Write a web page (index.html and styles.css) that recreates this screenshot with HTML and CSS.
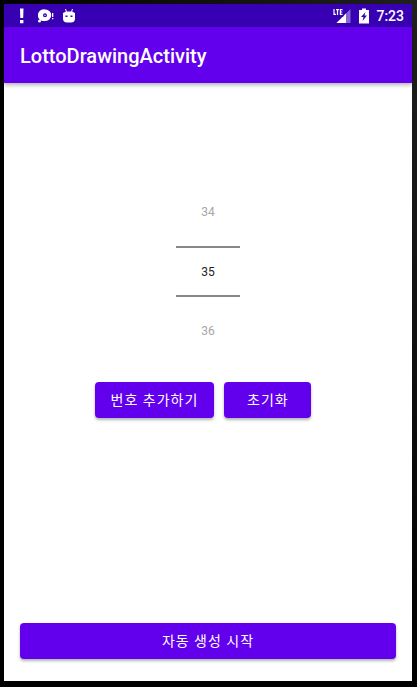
FILE: index.html
```html
<!DOCTYPE html>
<html lang="ko">
<head>
<meta charset="utf-8">
<meta name="viewport" content="width=device-width, initial-scale=1">
<title>LottoDrawingActivity</title>
<link rel="stylesheet" href="styles.css">
</head>
<body>
<div class="screen">
  <div class="status-bar">
    <div class="notifications">
      <svg class="icon-alert" width="4" height="16" viewBox="0 0 4 16" aria-hidden="true"><path fill="currentColor" d="M0 0.500h3.500l-.3 9.500h-2.900zM0 12h3.400v3.200H0z"/></svg>
      <svg class="icon-disc" width="16" height="14" viewBox="0 0 16 14" aria-hidden="true"><path fill="currentColor" fill-rule="evenodd" d="M7.500.5a5.700 5.700 0 1 1 0 11.500H4.200a5.700 5.700 0 0 1 3.300-11.500zM7 4.200a2 2 0 1 0 0 4 2 2 0 0 0 0-4z"/><circle cx="7" cy="6.200" r=".7" fill="currentColor"/><circle cx="1.500" cy="12" r="1.500" fill="currentColor"/><path fill="currentColor" d="M14 4h1.300v4H14zM14 9h1.300v1.300H14z"/></svg>
      <svg class="icon-robot" width="14" height="14" viewBox="0 0 14 14" aria-hidden="true"><path fill="none" stroke="currentColor" d="M3.500 0l1 3M10.500 0l-1 3"/><path fill="currentColor" fill-rule="evenodd" d="M4 2.500h6l3 1.500v5.500q0 4-4 4H5q-4 0-4-4V4zM3.500 6.500v1.500h2V6.500zM8.500 6.500v1.500h2V6.500z"/></svg>
    </div>
    <div class="system">
      <svg class="icon-signal" width="18" height="16" viewBox="0 0 18 16" aria-hidden="true"><path fill="currentColor" opacity=".4" d="M17.500 1v14H3.500z"/><path fill="currentColor" d="M13 5.500V15H3.500z"/><path fill="#3700b3" d="M0 0h10.500v8.500H0z"/><path fill="none" stroke="currentColor" stroke-width="1.200" d="M1 1v5.400h2M3 1.600h3M4.500 1.600V7M9.500 1.600H7.400v4.800h2.100M7.400 4h1.900"/></svg>
      <svg class="icon-battery" width="10" height="16" viewBox="0 0 10 16" aria-hidden="true"><path fill="currentColor" fill-rule="evenodd" d="M3 .5h4V2h3v13.500H0V2h3zM6.500 4L2 9h2.500L3.500 13 8 7.500H5.500z"/></svg>
      <time class="clock">7:23</time>
    </div>
  </div>
  <header class="app-bar"><h1 class="title">LottoDrawingActivity</h1></header>
  <main class="content">
    <div class="picker">
      <button class="picker-step" type="button">34</button>
      <input class="picker-value" type="text" inputmode="numeric" aria-label="번호" value="35">
      <button class="picker-step" type="button">36</button>
    </div>
    <div class="actions">
      <button class="button action" type="button">번호 추가하기</button>
      <button class="button action" type="button">초기화</button>
    </div>
    <button class="button start" type="button">자동 생성 시작</button>
  </main>
</div>
</body>
</html>
```
FILE: styles.css
```css
* {
  box-sizing: border-box;
}

body {
  margin: 0;
  padding: 4px 5px 6px 4px;
  min-height: 100vh;
  display: flex;
  background: linear-gradient(to top right, #000 50%, #202020);
  font-family: Roboto, "Noto Sans CJK KR", sans-serif;
}

.screen {
  flex: 1;
  display: flex;
  flex-direction: column;
  background: #fff;
}

.status-bar {
  height: 23px;
  padding: 0 8px 0 16px;
  display: flex;
  align-items: center;
  justify-content: space-between;
  background: #3700b3;
  color: #fff;
}

.notifications,
.system {
  display: flex;
  align-items: center;
}

.icon-disc {
  margin: 0 8px 0 14px;
}

.system {
  gap: 8px;
}

.clock {
  margin-left: -1px;
  font-size: 14px;
  line-height: 24px;
  font-weight: 500;
}

.app-bar {
  height: 56px;
  padding: 2px 16px 0;
  display: flex;
  align-items: center;
  background: #6200ee;
  color: #fff;
  box-shadow: 0 2px 4px rgba(0, 0, 0, 0.3);
}

.title {
  margin: 0;
  font-size: 20px;
  line-height: 24px;
  font-weight: 500;
}

.content {
  flex: 1;
  padding: 95px 16px 22px;
  display: flex;
  flex-direction: column;
  align-items: center;
}

.picker {
  width: 64px;
  display: flex;
  flex-direction: column;
}

.picker-step,
.picker-value {
  width: 100%;
  padding: 0;
  border: 0;
  background: none;
  font: 12px/16px Roboto, sans-serif;
  text-align: center;
}

.picker-step {
  height: 68px;
  color: #a6a6a6;
}

.picker-value {
  height: 51px;
  border: solid #888;
  border-width: 2px 0;
  color: #222;
}

.actions {
  margin-top: 17px;
  display: flex;
}

.button {
  height: 36px;
  padding: 0 16px;
  border: 0;
  border-radius: 4px;
  background: #6200ee;
  color: #fff;
  font: 14px/20px Roboto, "Noto Sans CJK KR", sans-serif;
  letter-spacing: 1px;
  box-shadow: 0 2px 3px rgba(0, 0, 0, 0.3);
}

.action {
  min-width: 87px;
  margin-right: 10px;
}

.start {
  width: 100%;
  margin-top: auto;
}
```
